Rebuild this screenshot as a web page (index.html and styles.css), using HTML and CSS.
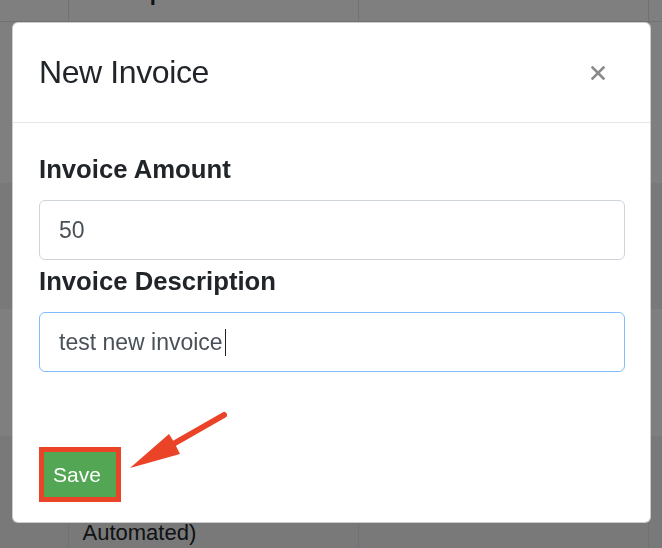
FILE: index.html
```html
<!DOCTYPE html>
<html>
<head>
  <meta name="viewport" content="width=device-width, initial-scale=1.0">
  <link rel="stylesheet" href="styles.css">
</head>
<body>
  <table class="invoices">
    <colgroup>
      <col class="col-id">
      <col class="col-desc">
      <col class="col-price">
      <col class="col-rest">
    </colgroup>
    <thead>
      <tr><th></th><th>Description</th><th>Price</th><th></th></tr>
    </thead>
    <tbody>
      <tr class="row-1"><td>1</td><td>Website hosting</td><td>$120.00</td><td></td></tr>
      <tr class="row-2 striped"><td>2</td><td>Domain renewal</td><td>$15.00</td><td></td></tr>
      <tr class="row-3"><td>3</td><td>Support plan</td><td>$80.00</td><td></td></tr>
      <tr class="row-4 striped"><td>4</td><td>Recurring<br>Invoice (Manual or<br>Automated)</td><td>$50.00</td><td></td></tr>
    </tbody>
  </table>

  <div class="backdrop"></div>

  <div class="modal">
    <div class="modal-content">
      <div class="modal-header">
        <h5 class="modal-title">New Invoice</h5>
        <button class="close" aria-label="Close">
          <svg width="14" height="14" viewBox="0 0 14 14">
            <path d="M1.5 1.5 L12.5 12.5 M12.5 1.5 L1.5 12.5" stroke="#8a8a8a" stroke-width="2.6" stroke-linecap="square"/>
          </svg>
        </button>
      </div>
      <div class="modal-body">
        <label class="field-label">Invoice Amount</label>
        <input class="form-control" type="text" value="50">
        <label class="field-label">Invoice Description</label>
        <div class="form-control focused">test new invoice<span class="caret"></span></div>
        <div class="actions">
          <span class="highlight"><button class="btn-save">Save</button></span>
        </div>
      </div>
      <!-- annotation arrow pointing at the save button -->
      <svg class="arrow" width="115" height="70" viewBox="0 0 115 70">
        <line x1="104" y1="10" x2="55" y2="38" stroke="#ea4328" stroke-width="6" stroke-linecap="round"/>
        <polygon points="10,63 49,29 54,37 60,49" fill="#ea4328"/>
      </svg>
    </div>
  </div>
</body>
</html>
```

FILE: styles.css
```css
* {
  box-sizing: border-box;
}

body {
  margin: 0;
  height: 100vh;
  overflow: hidden;
  background: #fff;
  font-family: 'Liberation Sans', Arial, sans-serif;
  color: #212529;
}

/* table behind the modal */
.invoices {
  margin-top: -36px;
  border-collapse: collapse;
  table-layout: fixed;
  width: 100%;
  font-size: 22px;
  line-height: 33px;
}

.col-id { width: 68px; }
.col-desc { width: 290px; }
.col-price { width: 290px; }

.invoices th,
.invoices td {
  padding: 12px 14px;
  border-left: 1px solid #dee2e6;
  text-align: left;
  white-space: nowrap;
  overflow: hidden;
}

.invoices th:first-child,
.invoices td:first-child {
  border-left: none;
}

.invoices th {
  vertical-align: bottom;
  border-bottom: 1px solid #dee2e6;
}

.invoices td {
  vertical-align: top;
  padding-top: 14px;
  padding-bottom: 0;
}

.striped td {
  background: #f2f2f2;
}

.row-1 td { height: 161px; }
.row-2 td { height: 126px; }
.row-3 td { height: 127px; }
.row-4 td { height: 113px; }

.backdrop {
  position: fixed;
  inset: 0;
  background: rgba(0, 0, 0, 0.5);
}

/* modal */
.modal {
  position: fixed;
  inset: 0;
  padding: 22px 0 0 12px;
}

.modal-content {
  position: relative;
  width: 639px;
  background: #fff;
  border: 1px solid rgba(0, 0, 0, 0.2);
  border-radius: 6px;
}

.modal-header {
  display: flex;
  align-items: center;
  justify-content: space-between;
  height: 100px;
  padding: 0 45px 0 26px;
  border-bottom: 1px solid #e3e5e8;
}

.modal-title {
  margin: 0;
  font-size: 32px;
  font-weight: 400;
  letter-spacing: -0.4px;
  color: #212529;
}

.close {
  display: flex;
  padding: 0;
  border: 0;
  background: none;
  cursor: pointer;
}

.modal-body {
  padding: 27px 25px 20px 26px;
}

.field-label {
  display: block;
  font-size: 25.7px;
  font-weight: 700;
  line-height: 38px;
  margin-bottom: 12px;
  color: #212529;
}

.form-control {
  display: flex;
  align-items: center;
  width: 100%;
  height: 60px;
  margin: 0 0 2px;
  padding: 0 19px;
  border: 1px solid #ced4da;
  border-radius: 6px;
  font-family: inherit;
  font-size: 23px;
  color: #495057;
  background: #fff;
  outline: none;
}

.form-control.focused {
  border-color: #80bdff;
}

.caret {
  display: inline-block;
  width: 1px;
  height: 27px;
  margin-left: 2px;
  background: #222;
}

.actions {
  display: flex;
  margin-top: 75px;
}

.highlight {
  display: flex;
  border: 5px solid #ea4328;
}

.btn-save {
  width: 72px;
  height: 45px;
  padding: 0 0 0 9px;
  border: 0;
  background: #53a653;
  color: #fff;
  font-family: inherit;
  font-size: 21px;
  text-align: left;
  cursor: pointer;
}

.arrow {
  position: absolute;
  left: 107px;
  top: 382px;
}
```
